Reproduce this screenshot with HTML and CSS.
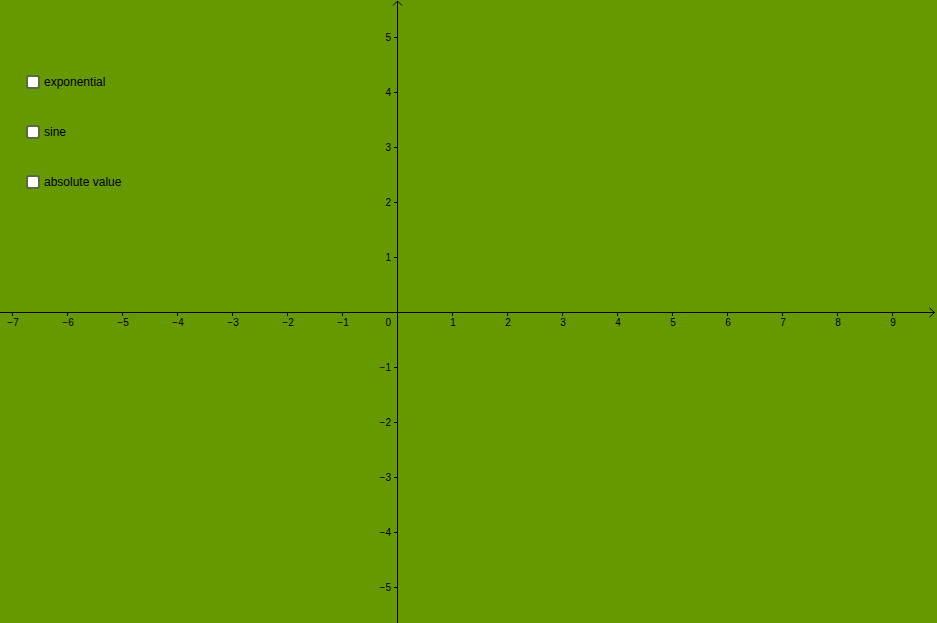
FILE: index.html
```html
<!DOCTYPE html>
<html>
<head>
<meta charset="utf-8">
<link rel="stylesheet" href="styles.css">
</head>
<body>
<div class="graphics">
  <svg class="axes" width="937" height="623" viewBox="0 0 937 623" xmlns="http://www.w3.org/2000/svg">
    <g class="lines" stroke="#000" stroke-width="1" fill="none">
      <line x1="0" y1="312.5" x2="935" y2="312.5"/>
      <line x1="397.5" y1="1" x2="397.5" y2="623"/>
      <polyline points="929.5,308 934.5,312.5 929.5,317"/>
      <polyline points="393,5.5 397.5,1 402,5.5"/>
      <path d="M12.5 313v3M67.5 313v3M122.5 313v3M177.5 313v3M232.5 313v3M287.5 313v3M342.5 313v3M452.5 313v3M507.5 313v3M562.5 313v3M617.5 313v3M672.5 313v3M727.5 313v3M782.5 313v3M837.5 313v3M892.5 313v3"/>
      <path d="M394 37.5h3M394 92.5h3M394 147.5h3M394 202.5h3M394 257.5h3M394 367.5h3M394 422.5h3M394 477.5h3M394 532.5h3M394 587.5h3"/>
    </g>
    <g class="xlabels" text-anchor="middle">
      <text x="13" y="326">−7</text>
      <text x="68" y="326">−6</text>
      <text x="123" y="326">−5</text>
      <text x="178" y="326">−4</text>
      <text x="233" y="326">−3</text>
      <text x="288" y="326">−2</text>
      <text x="343" y="326">−1</text>
      <text x="453" y="326">1</text>
      <text x="508" y="326">2</text>
      <text x="563" y="326">3</text>
      <text x="618" y="326">4</text>
      <text x="673" y="326">5</text>
      <text x="728" y="326">6</text>
      <text x="783" y="326">7</text>
      <text x="838" y="326">8</text>
      <text x="893" y="326">9</text>
    </g>
    <g class="ylabels" text-anchor="end">
      <text x="391" y="326">0</text>
      <text x="391" y="41">5</text>
      <text x="391" y="96">4</text>
      <text x="391" y="151">3</text>
      <text x="391" y="206">2</text>
      <text x="391" y="261">1</text>
      <text x="391" y="371">−1</text>
      <text x="391" y="426">−2</text>
      <text x="391" y="481">−3</text>
      <text x="391" y="536">−4</text>
      <text x="391" y="591">−5</text>
    </g>
  </svg>
  <div class="checks">
    <label class="check"><input type="checkbox" class="box"><span>exponential</span></label>
    <label class="check"><input type="checkbox" class="box"><span>sine</span></label>
    <label class="check"><input type="checkbox" class="box"><span>absolute value</span></label>
  </div>
</div>
</body>
</html>
```
FILE: styles.css
```css
html, body {
  margin: 0;
  padding: 0;
  width: 937px;
  height: 623px;
  overflow: hidden;
  background: #669900;
}
.graphics {
  position: relative;
  width: 937px;
  height: 623px;
  background: #669900;
}
.axes {
  display: block;
}
.axes text {
  font-family: "Liberation Sans", Arial, sans-serif;
  font-size: 10px;
  fill: #000;
}
.checks {
  position: absolute;
  left: 26px;
  top: 75px;
  display: flex;
  flex-direction: column;
  gap: 36px;
}
.check {
  display: flex;
  align-items: center;
  height: 14px;
  gap: 4px;
  font-family: "Liberation Sans", Arial, sans-serif;
  font-size: 12px;
  color: #000;
  line-height: 14px;
}
.box {
  appearance: none;
  -webkit-appearance: none;
  margin: 0;
  width: 14px;
  height: 14px;
  box-sizing: border-box;
  background: #fff;
  border: 2px solid #5a6a3c;
  border-radius: 3px;
}
```
